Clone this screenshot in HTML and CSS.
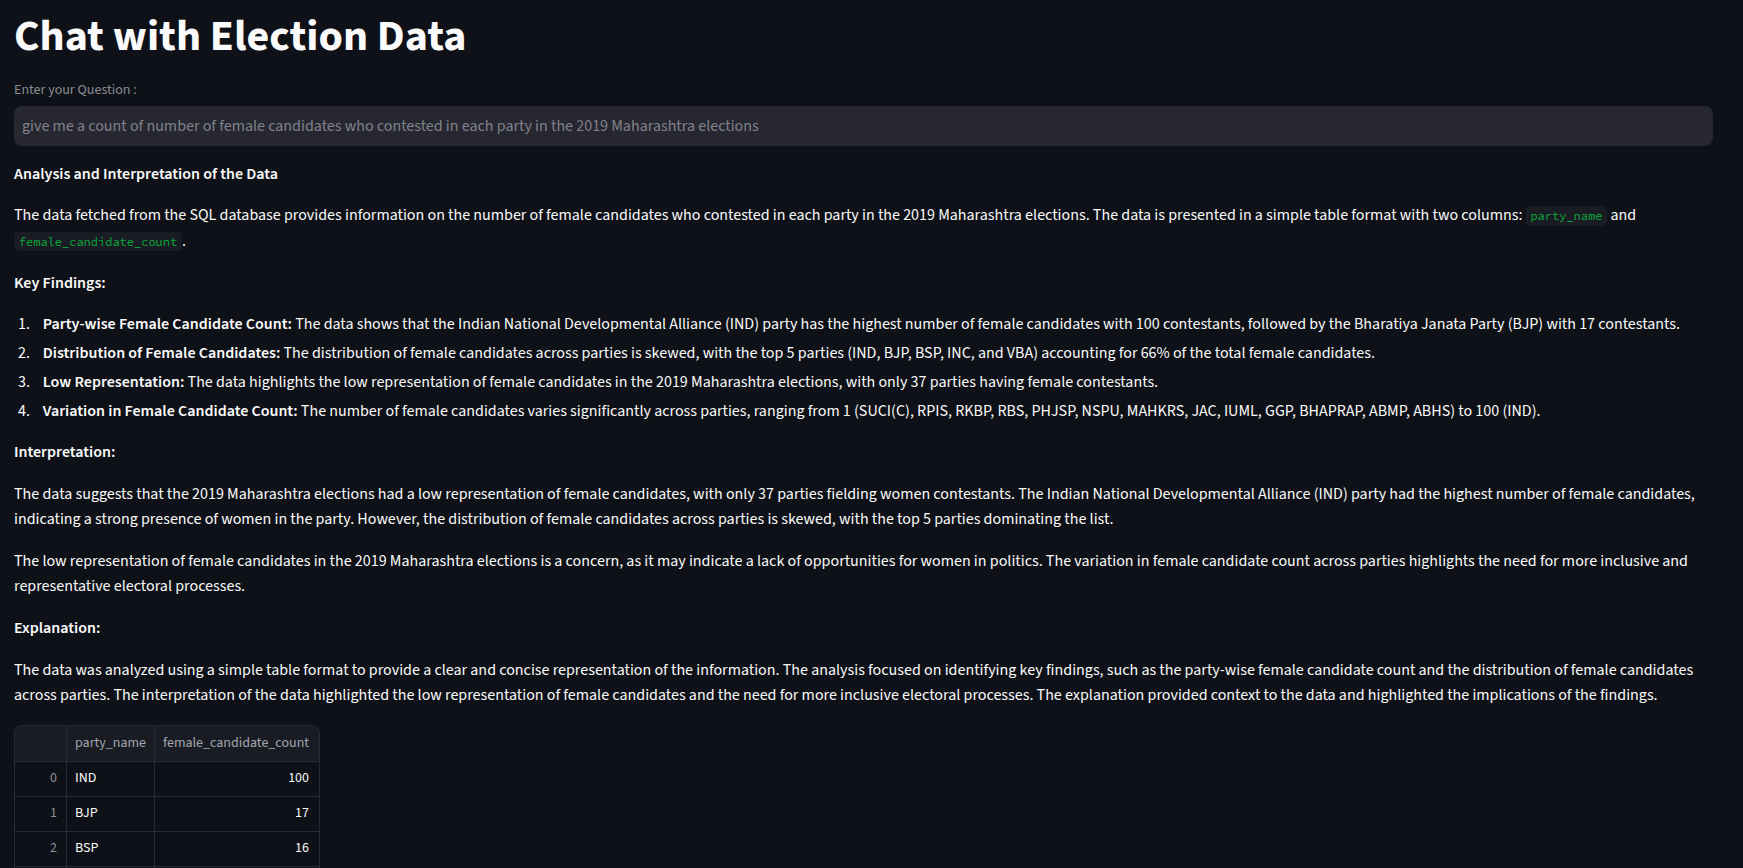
FILE: index.html
```html
<!DOCTYPE html>
<html lang="en">
<head>
<meta charset="utf-8">
<title>Chat with Election Data</title>
<link rel="stylesheet" href="styles.css">
</head>
<body>
<main class="app">
  <h1 class="title">Chat with Election Data</h1>

  <div class="field">
    <label class="field-label">Enter your Question :</label>
    <div class="input">give me a count of number of female candidates who contested in each party in the 2019 Maharashtra elections</div>
  </div>

  <div class="markdown">
    <p><strong>Analysis and Interpretation of the Data</strong></p>
    <p>The data fetched from the SQL database provides information on the number of female candidates who contested in each party in the 2019 Maharashtra elections. The data is presented in a simple table format with two columns: <code>party_name</code> and <code>female_candidate_count</code>.</p>
    <p><strong>Key Findings:</strong></p>
    <ol>
      <li><strong>Party-wise Female Candidate Count:</strong> The data shows that the Indian National Developmental Alliance (IND) party has the highest number of female candidates with 100 contestants, followed by the Bharatiya Janata Party (BJP) with 17 contestants.</li>
      <li><strong>Distribution of Female Candidates:</strong> The distribution of female candidates across parties is skewed, with the top 5 parties (IND, BJP, BSP, INC, and VBA) accounting for 66% of the total female candidates.</li>
      <li><strong>Low Representation:</strong> The data highlights the low representation of female candidates in the 2019 Maharashtra elections, with only 37 parties having female contestants.</li>
      <li><strong>Variation in Female Candidate Count:</strong> The number of female candidates varies significantly across parties, ranging from 1 (SUCI(C), RPIS, RKBP, RBS, PHJSP, NSPU, MAHKRS, JAC, IUML, GGP, BHAPRAP, ABMP, ABHS) to 100 (IND).</li>
    </ol>
    <p><strong>Interpretation:</strong></p>
    <p>The data suggests that the 2019 Maharashtra elections had a low representation of female candidates, with only 37 parties fielding women contestants. The Indian National Developmental Alliance (IND) party had the highest number of female candidates, indicating a strong presence of women in the party. However, the distribution of female candidates across parties is skewed, with the top 5 parties dominating the list.</p>
    <p>The low representation of female candidates in the 2019 Maharashtra elections is a concern, as it may indicate a lack of opportunities for women in politics. The variation in female candidate count across parties highlights the need for more inclusive and representative electoral processes.</p>
    <p><strong>Explanation:</strong></p>
    <p>The data was analyzed using a simple table format to provide a clear and concise representation of the information. The analysis focused on identifying key findings, such as the party-wise female candidate count and the distribution of female candidates across parties. The interpretation of the data highlighted the low representation of female candidates and the need for more inclusive electoral processes. The explanation provided context to the data and highlighted the implications of the findings.</p>
  </div>

  <div class="df">
    <div class="cell head idx"></div>
    <div class="cell head">party_name</div>
    <div class="cell head">female_candidate_count</div>

    <div class="cell idx">0</div>
    <div class="cell">IND</div>
    <div class="cell num">100</div>

    <div class="cell idx">1</div>
    <div class="cell">BJP</div>
    <div class="cell num">17</div>

    <div class="cell idx">2</div>
    <div class="cell">BSP</div>
    <div class="cell num">16</div>

    <div class="cell idx"></div>
    <div class="cell"></div>
    <div class="cell num"></div>
  </div>
</main>
</body>
</html>
```
FILE: styles.css
```css
html, body {
  margin: 0;
  padding: 0;
  background: #0e1117;
}

body {
  color: #fafafa;
  font-family: "Source Sans 3", "Source Sans Pro", "Noto Sans", sans-serif;
  font-size: 16px;
  line-height: 1.6;
}

.app {
  display: flex;
  flex-direction: column;
  align-items: stretch;
  gap: 16px;
  padding: 11px 30px 40px 14px;
}

.title {
  margin: 0;
  font-size: 44px;
  font-weight: 700;
  line-height: 1.2;
  color: #fafafa;
}

.field {
  display: flex;
  flex-direction: column;
}

.field-label {
  font-size: 14px;
  line-height: 21px;
  color: #8a8c93;
  margin-bottom: 5px;
}

.input {
  height: 40px;
  box-sizing: border-box;
  display: flex;
  align-items: center;
  padding: 1px 8px 0;
  background: #262730;
  border-radius: 8px;
  color: #808289;
  font-size: 16px;
  white-space: nowrap;
  overflow: hidden;
}

.markdown p {
  margin: 0 0 16px;
}

.markdown p:last-child {
  margin-bottom: 0;
}

.markdown strong {
  font-weight: 600;
}

.markdown ol {
  margin: 0 0 16px;
  padding-left: 0;
}

.markdown li {
  margin: 0.2em 0 0.2em 1.2em;
  padding-left: 0.6em;
}

.markdown code {
  font-family: "Source Code Pro", "DejaVu Sans Mono", monospace;
  font-size: 0.75em;
  padding: 0.2em 0.4em;
  border-radius: 4px;
  background: #1a1c23;
  color: #09ab3b;
}

.df {
  align-self: flex-start;
  display: grid;
  grid-template-columns: 52px 88px 164px;
  border: 1px solid #272a31;
  border-bottom: none;
  border-radius: 8px 8px 0 0;
  overflow: hidden;
  font-size: 14px;
  line-height: 1.2;
}

.cell {
  height: 35px;
  box-sizing: border-box;
  display: flex;
  align-items: center;
  padding: 0 8px;
  border-right: 1px solid #272a31;
  border-bottom: 1px solid #272a31;
  color: #fafafa;
  white-space: nowrap;
}

.cell:nth-child(3n) {
  border-right: none;
}

.cell.head {
  height: 36px;
  background: #1a1c24;
  color: #a3a6ad;
}

.cell.idx {
  justify-content: flex-end;
  padding-right: 9px;
  color: #8f9197;
}

.cell.num {
  justify-content: flex-end;
  padding-right: 10px;
}
```
